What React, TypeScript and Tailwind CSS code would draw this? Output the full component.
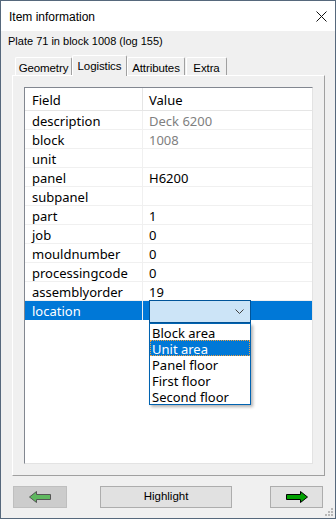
import React from "react";

const rows: [string, string, boolean?][] = [
  ["description", "Deck 6200", true],
  ["block", "1008", true],
  ["unit", ""],
  ["panel", "H6200"],
  ["subpanel", ""],
  ["part", "1"],
  ["job", "0"],
  ["mouldnumber", "0"],
  ["processingcode", "0"],
  ["assemblyorder", "19"],
];

const options = ["Block area", "Unit area", "Panel floor", "First floor", "Second floor"];

function Tab({ label, w, selected, ml }: { label: string; w: string; selected?: boolean; ml?: string }) {
  if (selected) {
    return (
      <div
        className={`${w} ${ml ?? ""} h-[21px] relative z-10 bg-[#f0f0f0] border-l border-t border-white border-r border-r-[#a0a0a0] rounded-t-[2px] flex items-start justify-center pt-[2px] text-[11.5px] tracking-[-0.1px] font-['Liberation_Sans',sans-serif] text-black`}
      >
        {label}
      </div>
    );
  }
  return (
    <div
      className={`${w} ${ml ?? ""} h-[18px] mb-[1px] bg-[#f0f0f0] border-l border-t border-white border-r border-r-[#a0a0a0] rounded-t-[2px] flex items-start justify-center pt-[2px] text-[11.5px] tracking-[-0.1px] font-['Liberation_Sans',sans-serif] text-black`}
    >
      {label}
    </div>
  );
}

function Arrow({ dir, fill, stroke }: { dir: "left" | "right"; fill: string; stroke: string }) {
  const d =
    dir === "right"
      ? "M0.5 3.5 H14.5 V0.5 L21.5 6 L14.5 11.5 V8.5 H0.5 Z"
      : "M21.5 3.5 H7.5 V0.5 L0.5 6 L7.5 11.5 V8.5 H21.5 Z";
  return (
    <svg width="22" height="12" viewBox="0 0 22 12">
      <path d={d} fill={fill} stroke={stroke} strokeWidth="1" />
    </svg>
  );
}

export default function App() {
  return (
    <div className="w-[336px] h-[519px] bg-[#f0f0f0] border border-[#56687c] flex flex-col relative overflow-hidden font-['Noto_Sans',sans-serif] text-black">
      {/* title bar */}
      <div className="h-[30px] bg-white flex items-center justify-between pl-[8px] pr-[8px]">
        <span className="text-[12px] font-['Liberation_Sans',sans-serif] pt-[1px]">Item information</span>
        <svg width="11" height="11" viewBox="0 0 11 11">
          <path d="M0.5 0.5 L10.5 10.5 M10.5 0.5 L0.5 10.5" stroke="#111" strokeWidth="1" />
        </svg>
      </div>
      {/* subtitle */}
      <div className="h-[20px] flex items-center pl-[7px] text-[11px] font-['Liberation_Sans',sans-serif]">
        Plate 71 in block 1008 (log 155)
      </div>
      {/* tabs */}
      <div className="mt-[4px] h-[21px] -mb-[1px] flex items-end pl-[14px]">
        <Tab label="Geometry" w="w-[57px]" />
        <Tab label="Logistics" w="w-[55px]" selected />
        <Tab label="Attributes" w="w-[58px]" />
        <Tab label="Extra" w="w-[41px]" ml="ml-[1px]" />
      </div>
      {/* panel */}
      <div className="ml-[11px] w-[313px] h-[401px] border-l border-t border-white border-r border-b border-r-[#a0a0a0] border-b-[#a0a0a0] p-[11px]">
        <div className="w-full h-full bg-white border-l border-t border-[#828790] border-r border-b border-r-[#e3e3e3] border-b-[#e3e3e3] flex flex-col text-[13px]">
          {/* header */}
          <div className="h-[23px] flex border-b border-[#e5e5e5]">
            <div className="w-[118px] pl-[7px] pt-[3px] flex items-center border-r border-[#e5e5e5]">Field</div>
            <div className="flex-1 pl-[6px] pt-[3px] flex items-center">Value</div>
          </div>
          {rows.map(([f, v, gray]) => (
            <div key={f} className="h-[19px] flex border-b border-[#f0f0f0]">
              <div className="w-[118px] pl-[7px] pt-[3px] flex items-center border-r border-[#f0f0f0]">{f}</div>
              <div className={`flex-1 pl-[6px] pt-[3px] flex items-center ${gray ? "text-[#808080]" : "text-black"}`}>{v}</div>
            </div>
          ))}
          {/* location row */}
          <div className="h-[19px] flex bg-[#0078d7] text-white relative">
            <div className="w-[118px] pl-[7px] pt-[3px] flex items-center border-r border-[#f0f0f0]">location</div>
            <div className="flex-1 relative">
              <div className="absolute left-[6px] -top-[1px] w-[102px] h-[23px] bg-[#cce4f7] border border-[#005499] flex items-center justify-end pr-[6px]">
                <svg width="9" height="5" viewBox="0 0 9 5">
                  <path d="M0.5 0.5 L4.5 4.5 L8.5 0.5" fill="none" stroke="#404040" strokeWidth="1" />
                </svg>
              </div>
              <div className="absolute left-[6px] top-[22px] w-[102px] h-[82px] bg-white border border-[#0063b1] shadow-[2px_2px_3px_rgba(0,0,0,0.3)] text-black z-20 flex flex-col">
                {options.map((o) => (
                  <div
                    key={o}
                    className={`h-[16px] shrink-0 flex items-center pt-[2px] ${
                      o === "Unit area"
                        ? "bg-[#0078d7] text-white border border-dotted border-[#f0a040] pl-[1px]"
                        : "pl-[2px]"
                    }`}
                  >
                    <span className="leading-[12px]">{o}</span>
                  </div>
                ))}
              </div>
            </div>
          </div>
        </div>
      </div>
      {/* buttons */}
      <div className="mt-[10px] h-[22px] flex">
        <div className="ml-[12px] w-[54px] h-[22px] bg-[#cccccc] border border-[#bfbfbf] flex items-center justify-center">
          <Arrow dir="left" fill="#5fb85f" stroke="#555555" />
        </div>
        <div className="ml-[33px] w-[132px] h-[22px] bg-[#e1e1e1] border border-[#adadad] flex items-center justify-center text-[11.5px] font-['Liberation_Sans',sans-serif]">
          Highlight
        </div>
        <div className="ml-[38px] w-[53px] h-[22px] bg-[#e1e1e1] border border-[#adadad] flex items-center justify-center">
          <Arrow dir="right" fill="#00a000" stroke="#000000" />
        </div>
      </div>
      {/* resize grip */}
      <svg className="absolute right-[1px] bottom-[1px]" width="10" height="10" viewBox="0 0 10 10">
        <rect x="7" y="1" width="2" height="2" fill="#b8b8b8" />
        <rect x="4" y="4" width="2" height="2" fill="#b8b8b8" />
        <rect x="7" y="4" width="2" height="2" fill="#b8b8b8" />
        <rect x="1" y="7" width="2" height="2" fill="#b8b8b8" />
        <rect x="4" y="7" width="2" height="2" fill="#b8b8b8" />
        <rect x="7" y="7" width="2" height="2" fill="#b8b8b8" />
      </svg>
    </div>
  );
}
